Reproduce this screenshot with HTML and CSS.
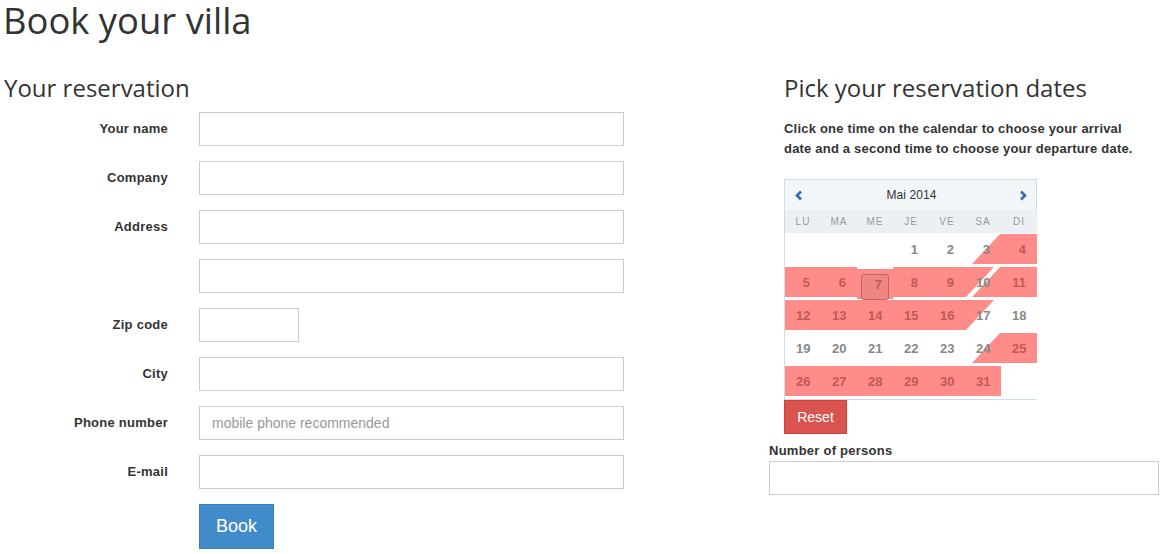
FILE: index.html
```html
<!DOCTYPE html>
<html lang="en">
<head>
<meta charset="utf-8">
<title>Book your villa</title>
<link rel="stylesheet" href="styles.css">
</head>
<body>
<div class="page">
  <h1 class="page-title">Book your villa</h1>
  <div class="cols">
    <section class="left">
      <h2 class="section-title">Your reservation</h2>
      <form class="form">
        <div class="row"><label class="lbl">Your name</label><input class="ctl" type="text"></div>
        <div class="row"><label class="lbl">Company</label><input class="ctl" type="text"></div>
        <div class="row"><label class="lbl">Address</label><input class="ctl" type="text"></div>
        <div class="row"><label class="lbl"></label><input class="ctl" type="text"></div>
        <div class="row"><label class="lbl">Zip code</label><input class="ctl ctl-zip" type="text"></div>
        <div class="row"><label class="lbl">City</label><input class="ctl" type="text"></div>
        <div class="row"><label class="lbl">Phone number</label><input class="ctl" type="text" placeholder="mobile phone recommended"></div>
        <div class="row"><label class="lbl">E-mail</label><input class="ctl" type="text"></div>
        <div class="row"><span class="lbl"></span><button class="btn-book" type="button">Book</button></div>
      </form>
    </section>
    <section class="right">
      <div class="picker">
        <h2 class="section-title section-title-right">Pick your reservation dates</h2>
        <p class="hint">Click one time on the calendar to choose your arrival date and a second time to choose your departure date.</p>
        <div class="cal">
          <div class="cal-head">
            <span class="nav"><svg width="8" height="11" viewBox="0 0 8 11"><polyline points="6,1.5 2,5.5 6,9.5" fill="none" stroke="#2f6fb8" stroke-width="2.6"/></svg></span>
            <span class="month">Mai 2014</span>
            <span class="nav"><svg width="8" height="11" viewBox="0 0 8 11"><polyline points="2,1.5 6,5.5 2,9.5" fill="none" stroke="#2f6fb8" stroke-width="2.6"/></svg></span>
          </div>
          <div class="cal-week">
            <span>Lu</span><span>Ma</span><span>Me</span><span>Je</span><span>Ve</span><span>Sa</span><span>Di</span>
          </div>
          <div class="cal-days">
            <span class="d"></span><span class="d"></span><span class="d"></span>
            <span class="d"><i>1</i></span><span class="d"><i>2</i></span>
            <span class="d arr"><i>3</i></span><span class="d on"><i>4</i></span>

            <span class="d on"><i>5</i></span><span class="d on"><i>6</i></span>
            <span class="d on today"><i>7</i></span>
            <span class="d on"><i>8</i></span><span class="d on"><i>9</i></span>
            <span class="d dep arr"><i>10</i></span><span class="d on"><i>11</i></span>

            <span class="d on"><i>12</i></span><span class="d on"><i>13</i></span><span class="d on"><i>14</i></span>
            <span class="d on"><i>15</i></span><span class="d on"><i>16</i></span>
            <span class="d dep"><i>17</i></span><span class="d"><i>18</i></span>

            <span class="d"><i>19</i></span><span class="d"><i>20</i></span><span class="d"><i>21</i></span>
            <span class="d"><i>22</i></span><span class="d"><i>23</i></span>
            <span class="d arr"><i>24</i></span><span class="d on"><i>25</i></span>

            <span class="d on"><i>26</i></span><span class="d on"><i>27</i></span><span class="d on"><i>28</i></span>
            <span class="d on"><i>29</i></span><span class="d on"><i>30</i></span><span class="d on"><i>31</i></span>
            <span class="d"></span>
          </div>
        </div>
        <button class="btn-reset" type="button">Reset</button>
      </div>
      <label class="np-label">Number of persons</label>
      <input class="ctl ctl-np" type="text">
    </section>
  </div>
</div>
</body>
</html>
```

FILE: styles.css
```css
* { box-sizing: border-box; }

body {
  margin: 0;
  background: #fff;
  color: #333;
  font-family: "Liberation Sans", Arial, sans-serif;
  font-size: 14px;
}

.page {
  width: 1162px;
}

.page-title {
  margin: 0;
  padding-left: 3px;
  font: 36.4px/40px "Open Sans", sans-serif;
  color: #333;
}

.cols {
  display: flex;
}

.left {
  flex: none;
  width: 769px;
}

.right {
  flex: none;
  width: 390px;
}

.section-title {
  margin: 35px 0 11px;
  padding-left: 4px;
  font: 24px/26px "Open Sans", sans-serif;
  font-weight: 400;
  color: #333;
}

.section-title-right {
  padding-left: 0;
}

.form {
  display: flex;
  flex-direction: column;
  gap: 15px;
}

.row {
  display: flex;
  align-items: center;
}

.lbl {
  flex: none;
  width: 168px;
  margin-right: 31px;
  text-align: right;
  font-weight: bold;
  font-size: 13px;
  line-height: 18px;
  letter-spacing: 0.25px;
  color: #333;
  padding-bottom: 1px;
}

.ctl {
  display: block;
  width: 425px;
  height: 34px;
  padding: 6px 12px;
  border: 1px solid #ccc;
  border-radius: 0;
  background: #fff;
  font-family: "Liberation Sans", Arial, sans-serif;
  font-size: 14px;
  color: #555;
}

.ctl::placeholder {
  color: #999;
}

.ctl-zip {
  width: 100px;
}

.btn-book {
  height: 45px;
  padding: 0 16px;
  border: 1px solid #357ebd;
  background: #428bca;
  color: #fff;
  font-family: "Liberation Sans", Arial, sans-serif;
  font-size: 18px;
}

.picker {
  padding-left: 15px;
}

.hint {
  width: 352px;
  margin: 18px 0 20px;
  font-weight: bold;
  font-size: 13px;
  line-height: 20px;
  letter-spacing: 0.2px;
  color: #333;
}

/* calendar */
.cal {
  width: 253px;
  border-left: 1px solid #cddeeb;
  border-bottom: 1px solid #cddeeb;
}

.cal-head {
  display: flex;
  align-items: center;
  justify-content: space-between;
  height: 31px;
  border-top: 1px solid #cddeeb;
  border-right: 1px solid #cddeeb;
  background: #f3f6f9;
}

.nav {
  display: flex;
  align-items: center;
  justify-content: center;
  width: 28px;
  height: 30px;
}

.nav:last-child {
  width: 26px;
}

.month {
  font-size: 12px;
  color: #333;
  letter-spacing: 0.1px;
}

.cal-week {
  display: grid;
  grid-template-columns: repeat(7, 36px);
  height: 23px;
  align-items: center;
  background: #ecf0f4;
}

.cal-week span {
  text-align: center;
  font-size: 10px;
  color: #999;
  letter-spacing: 1px;
  text-transform: uppercase;
}

.cal-days {
  display: grid;
  grid-template-columns: repeat(7, 36px);
  grid-auto-rows: 30px;
  row-gap: 3px;
  padding: 1px 0 3px;
}

.d {
  position: relative;
  display: flex;
  align-items: center;
  justify-content: center;
  font-weight: bold;
  font-size: 13px;
  color: #888;
}

.d i {
  position: relative;
  z-index: 2;
  display: block;
  width: 14px;
  text-align: right;
  font-style: normal;
}

.d.on {
  background: #ff8c88;
  color: #c05a58;
}

.d.arr::after,
.d.dep::before {
  content: "";
  position: absolute;
  top: 0;
  bottom: 0;
  left: 0;
  right: 0;
  background: #ff8c88;
  z-index: 1;
}

.d.arr::after {
  clip-path: polygon(7px 100%, 35px 0, 100% 0, 100% 100%);
}

.d.dep::before {
  clip-path: polygon(0 0, 29px 0, 1px 100%, 0 100%);
}

.d.today {
  margin-top: 2px;
  margin-bottom: -2px;
}

.d.today::before {
  content: "";
  position: absolute;
  left: 4px;
  top: 5px;
  width: 26px;
  height: 24px;
  border: 1px solid #b46a68;
  border-radius: 3px;
  background: #ef8682;
  z-index: 1;
}

.btn-reset {
  display: block;
  width: 63px;
  height: 34px;
  padding: 0;
  border: 1px solid #d43f3a;
  background: #d9534f;
  color: #fff;
  font-family: "Liberation Sans", Arial, sans-serif;
  font-size: 14px;
}

.np-label {
  display: block;
  margin-top: 7px;
  font-weight: bold;
  font-size: 13px;
  line-height: 20px;
  letter-spacing: 0.25px;
  color: #333;
}

.ctl-np {
  width: 390px;
}
```
